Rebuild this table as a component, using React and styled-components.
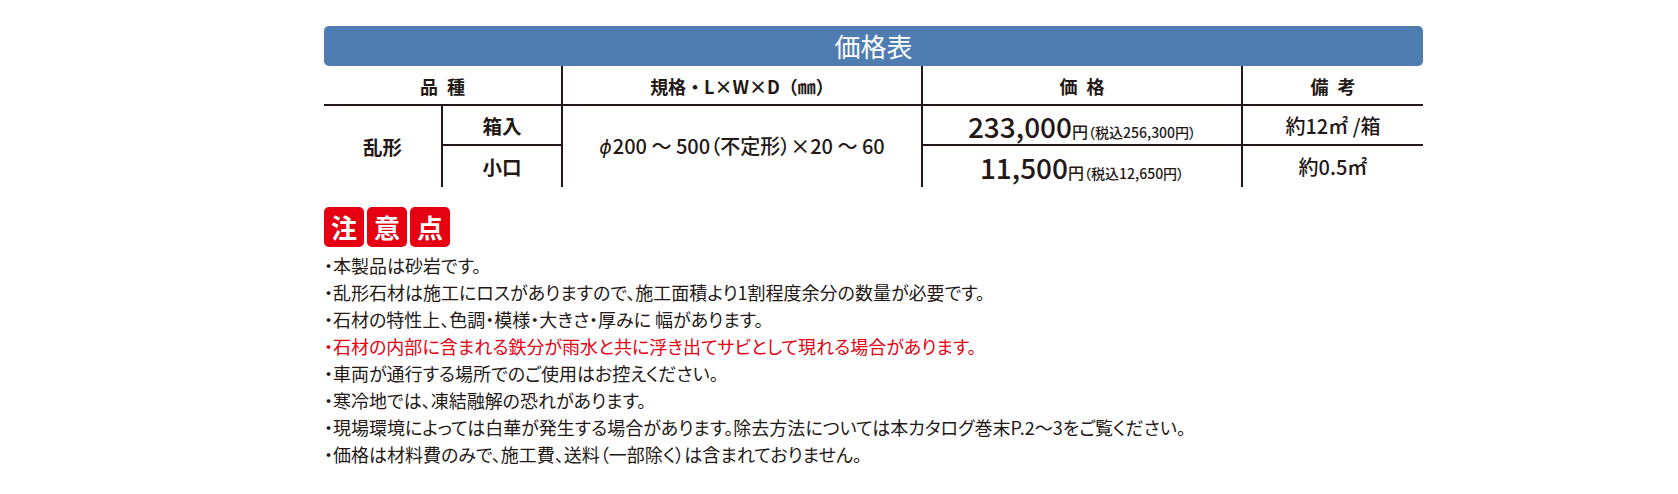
import React from "react";
import styled, { createGlobalStyle } from "styled-components";

const GlobalStyle = createGlobalStyle`
  html, body { margin: 0; padding: 0; background: #ffffff; }
  body {
    font-family: "Noto Sans CJK JP", "Noto Sans", sans-serif;
    color: #231815;
  }
`;

const LINE = "#231815";

const Page = styled.div`
  width: 1678px;
  height: 494px;
  box-sizing: border-box;
  padding: 26px 0 0 324px;
`;

const Section = styled.section`
  width: 1099px;
`;

const TitleBar = styled.div`
  height: 40px;
  background: #4f7db1;
  border-radius: 5px;
  color: #ffffff;
  display: flex;
  align-items: center;
  justify-content: center;
  font-size: 26px;
  line-height: 1;
`;

const Table = styled.div`
  display: grid;
  grid-template-columns: 119px 120px 360px 320px 180px;
  grid-template-rows: 40px 40px 41px;
`;

const Cell = styled.div`
  box-sizing: border-box;
  display: flex;
  align-items: center;
  justify-content: center;
  white-space: nowrap;
  grid-column: ${(p) => p.$col};
  grid-row: ${(p) => p.$row};
  border-right: ${(p) => (p.$r ? `2px solid ${LINE}` : "none")};
  border-bottom: ${(p) => (p.$b ? `2px solid ${LINE}` : "none")};
  padding-top: ${(p) => (p.$b ? "2px" : "0")};
  line-height: 1;
`;

const HeadText = styled.span`
  font-size: 18px;
  font-weight: 700;
  word-spacing: 5px;
`;

const NameText = styled.span`
  font-size: 19.5px;
  font-weight: 700;
`;

const SpecText = styled.span`
  font-size: 20px;
  font-weight: 500;
  font-feature-settings: "palt";
`;

const Phi = styled.span`
  font-family: "DejaVu Sans", sans-serif;
  font-style: italic;
  font-size: 19px;
  margin-right: 1px;
`;

const Price = styled.span`
  display: inline-flex;
  align-items: baseline;
  font-weight: 500;
  font-feature-settings: "palt";
`;

const Amount = styled.span`
  font-size: 28px;
`;

const Yen = styled.span`
  font-size: 16px;
`;

const Tax = styled.span`
  font-size: 14px;
`;

const Remark = styled.span`
  font-size: 20px;
  font-weight: 500;
`;

const Notice = styled.div`
  margin-top: 20px;
  display: flex;
  gap: 3px;
`;

const NoticeBox = styled.span`
  width: 40px;
  height: 40px;
  border-radius: 5px;
  background: #e50012;
  color: #ffffff;
  font-size: 26px;
  font-weight: 700;
  display: flex;
  align-items: center;
  justify-content: center;
  line-height: 1;
`;

const Notes = styled.ul`
  list-style: none;
  margin: 5px 0 0;
  padding: 0;
  font-size: 18px;
  line-height: 27px;
  font-feature-settings: "palt";
`;

const Note = styled.li`
  color: ${(p) => (p.$alert ? "#e60012" : "#231815")};
  white-space: nowrap;
`;

const notes = [
  { t: "・本製品は砂岩です。" },
  { t: "・乱形石材は施工にロスがありますので、施工面積より1割程度余分の数量が必要です。" },
  { t: "・石材の特性上、色調・模様・大きさ・厚みに 幅があります。" },
  { t: "・石材の内部に含まれる鉄分が雨水と共に浮き出てサビとして現れる場合があります。", alert: true },
  { t: "・車両が通行する場所でのご使用はお控えください。" },
  { t: "・寒冷地では、凍結融解の恐れがあります。" },
  { t: "・現場環境によっては白華が発生する場合があります。除去方法については本カタログ巻末P.2〜3をご覧ください。" },
  { t: "・価格は材料費のみで、施工費、送料（一部除く）は含まれておりません。" },
];

export default function App() {
  return (
    <>
      <GlobalStyle />
      <Page>
        <Section>
          <TitleBar>価格表</TitleBar>
          <Table>
            <Cell $col="1 / 3" $row="1" $r $b><HeadText>品 種</HeadText></Cell>
            <Cell $col="3" $row="1" $r $b><HeadText>規格・L×W×D（㎜）</HeadText></Cell>
            <Cell $col="4" $row="1" $r $b><HeadText>価 格</HeadText></Cell>
            <Cell $col="5" $row="1" $b><HeadText>備 考</HeadText></Cell>

            <Cell $col="1" $row="2 / 4" $r><NameText>乱形</NameText></Cell>
            <Cell $col="2" $row="2" $r $b><NameText>箱入</NameText></Cell>
            <Cell $col="2" $row="3" $r><NameText>小口</NameText></Cell>
            <Cell $col="3" $row="2 / 4" $r>
              <SpecText><Phi>ϕ</Phi>200 〜 500（不定形）×20 〜 60</SpecText>
            </Cell>
            <Cell $col="4" $row="2" $r $b>
              <Price><Amount>233,000</Amount><Yen>円</Yen><Tax>（税込256,300円）</Tax></Price>
            </Cell>
            <Cell $col="5" $row="2" $b><Remark>約12㎡ /箱</Remark></Cell>
            <Cell $col="4" $row="3" $r>
              <Price><Amount>11,500</Amount><Yen>円</Yen><Tax>（税込12,650円）</Tax></Price>
            </Cell>
            <Cell $col="5" $row="3"><Remark>約0.5㎡</Remark></Cell>
          </Table>

          <Notice>
            <NoticeBox>注</NoticeBox>
            <NoticeBox>意</NoticeBox>
            <NoticeBox>点</NoticeBox>
          </Notice>
          <Notes>
            {notes.map((n, i) => (
              <Note key={i} $alert={n.alert}>{n.t}</Note>
            ))}
          </Notes>
        </Section>
      </Page>
    </>
  );
}
